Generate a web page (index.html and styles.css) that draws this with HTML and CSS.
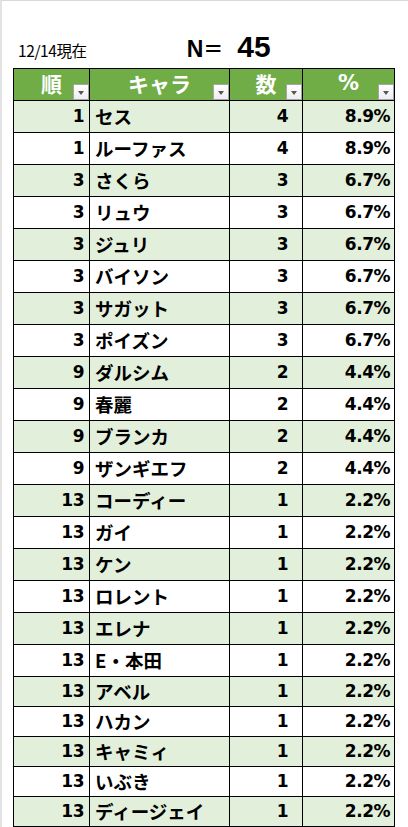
FILE: index.html
```html
<!DOCTYPE html>
<html lang="ja">
<head>
<meta charset="utf-8">
<link rel="stylesheet" href="styles.css">
</head>
<body>
<div class="page">
  <div class="title">
    <span class="date">12/14現在</span>
    <span class="n"><span class="n-label">N<span class="eq">＝</span></span><span class="n-val">45</span></span>
  </div>
  <table class="rank">
    <colgroup><col class="c1"><col class="c2"><col class="c3"><col class="c4"></colgroup>
    <thead>
      <tr><th>順<span class="dd"></span></th><th>キャラ<span class="dd"></span></th><th>数<span class="dd"></span></th><th class="pct-h">%<span class="dd"></span></th></tr>
    </thead>
    <tbody>
      <tr class="g"><td class="r">1</td><td class="nm">セス</td><td class="cnt">4</td><td class="pc">8.9%</td></tr>
      <tr><td class="r">1</td><td class="nm">ルーファス</td><td class="cnt">4</td><td class="pc">8.9%</td></tr>
      <tr class="g"><td class="r">3</td><td class="nm">さくら</td><td class="cnt">3</td><td class="pc">6.7%</td></tr>
      <tr><td class="r">3</td><td class="nm">リュウ</td><td class="cnt">3</td><td class="pc">6.7%</td></tr>
      <tr class="g"><td class="r">3</td><td class="nm">ジュリ</td><td class="cnt">3</td><td class="pc">6.7%</td></tr>
      <tr><td class="r">3</td><td class="nm">バイソン</td><td class="cnt">3</td><td class="pc">6.7%</td></tr>
      <tr class="g"><td class="r">3</td><td class="nm">サガット</td><td class="cnt">3</td><td class="pc">6.7%</td></tr>
      <tr><td class="r">3</td><td class="nm">ポイズン</td><td class="cnt">3</td><td class="pc">6.7%</td></tr>
      <tr class="g"><td class="r">9</td><td class="nm">ダルシム</td><td class="cnt">2</td><td class="pc">4.4%</td></tr>
      <tr><td class="r">9</td><td class="nm">春麗</td><td class="cnt">2</td><td class="pc">4.4%</td></tr>
      <tr class="g"><td class="r">9</td><td class="nm">ブランカ</td><td class="cnt">2</td><td class="pc">4.4%</td></tr>
      <tr><td class="r">9</td><td class="nm">ザンギエフ</td><td class="cnt">2</td><td class="pc">4.4%</td></tr>
      <tr class="g"><td class="r">13</td><td class="nm">コーディー</td><td class="cnt">1</td><td class="pc">2.2%</td></tr>
      <tr><td class="r">13</td><td class="nm">ガイ</td><td class="cnt">1</td><td class="pc">2.2%</td></tr>
      <tr class="g"><td class="r">13</td><td class="nm">ケン</td><td class="cnt">1</td><td class="pc">2.2%</td></tr>
      <tr><td class="r">13</td><td class="nm">ロレント</td><td class="cnt">1</td><td class="pc">2.2%</td></tr>
      <tr class="g"><td class="r">13</td><td class="nm">エレナ</td><td class="cnt">1</td><td class="pc">2.2%</td></tr>
      <tr><td class="r">13</td><td class="nm">E・本田</td><td class="cnt">1</td><td class="pc">2.2%</td></tr>
      <tr class="g s"><td class="r">13</td><td class="nm">アベル</td><td class="cnt">1</td><td class="pc">2.2%</td></tr>
      <tr class="s"><td class="r">13</td><td class="nm">ハカン</td><td class="cnt">1</td><td class="pc">2.2%</td></tr>
      <tr class="g s"><td class="r">13</td><td class="nm">キャミィ</td><td class="cnt">1</td><td class="pc">2.2%</td></tr>
      <tr class="s"><td class="r">13</td><td class="nm">いぶき</td><td class="cnt">1</td><td class="pc">2.2%</td></tr>
      <tr class="g s"><td class="r">13</td><td class="nm">ディージェイ</td><td class="cnt">1</td><td class="pc">2.2%</td></tr>
    </tbody>
  </table>
</div>
</body>
</html>
```
FILE: styles.css
```css
html, body {
  margin: 0;
  padding: 0;
  background: #fff;
}
body {
  width: 408px;
  height: 827px;
  overflow: hidden;
  box-sizing: border-box;
  border-top: 1px solid #d9d9d9;
  border-left: 2px solid #e3e3e3;
  font-family: "Noto Sans CJK JP", sans-serif;
  color: #000;
}
.page {
  padding-left: 11px;
}
.title {
  height: 67px;
  display: flex;
  align-items: baseline;
  box-sizing: border-box;
  padding-top: 29px;
}
.date {
  margin-left: 5px;
  font-size: 15.5px;
  font-family: "Noto Sans CJK JP", sans-serif;
  letter-spacing: -0.4px;
}
.n {
  margin-left: 100px;
  font-weight: bold;
  display: flex;
  align-items: baseline;
}
.n-label {
  font-family: "Liberation Sans", "Noto Sans CJK JP", sans-serif;
  font-size: 23px;
}
.eq {
  font-family: "Noto Sans CJK JP", sans-serif;
  font-size: 20px;
}
.n-val {
  margin-left: 14px;
  font-family: "Liberation Sans", sans-serif;
  font-size: 30px;
}
.rank {
  border-collapse: collapse;
  table-layout: fixed;
  width: 382px;
  border: 1px solid #000;
}
.c1 { width: 76px; }
.c2 { width: 140px; }
.c3 { width: 73px; }
.c4 { width: 92px; }
.rank th, .rank td {
  border: 1px solid #000;
  padding: 0;
  white-space: nowrap;
  overflow: hidden;
}
.rank th {
  position: relative;
  height: 31px;
  background: #70ad47;
  color: #fff;
  font-weight: bold;
  font-size: 21px;
  text-align: center;
  vertical-align: top;
  line-height: 28px;
}
.pct-h {
  font-family: "DejaVu Sans", sans-serif;
  font-size: 20px;
}
.dd {
  position: absolute;
  right: 0;
  bottom: 0;
  width: 16px;
  height: 16px;
  box-sizing: border-box;
  border: 1px solid #a6a6a6;
  background: linear-gradient(#ffffff, #eeeef2);
}
.dd::after {
  content: "";
  position: absolute;
  left: 4px;
  top: 6px;
  border-left: 3.5px solid transparent;
  border-right: 3.5px solid transparent;
  border-top: 4px solid #555;
}
.rank td {
  height: 31px;
  font-weight: bold;
  vertical-align: middle;
  line-height: 1;
}
.rank tr.s td {
  height: 29px;
}
.rank tr.g td {
  background: #e2efda;
}
.r, .cnt, .pc {
  font-family: "DejaVu Sans", sans-serif;
  font-size: 17px;
  letter-spacing: -0.5px;
  text-align: right;
}
.r { padding-right: 5px !important; }
.cnt { padding-right: 14px !important; }
.pc { padding-right: 4px !important; }
.nm {
  font-family: "Noto Sans CJK JP", sans-serif;
  font-size: 18.5px;
  padding-left: 5px !important;
  text-align: left;
}
```
